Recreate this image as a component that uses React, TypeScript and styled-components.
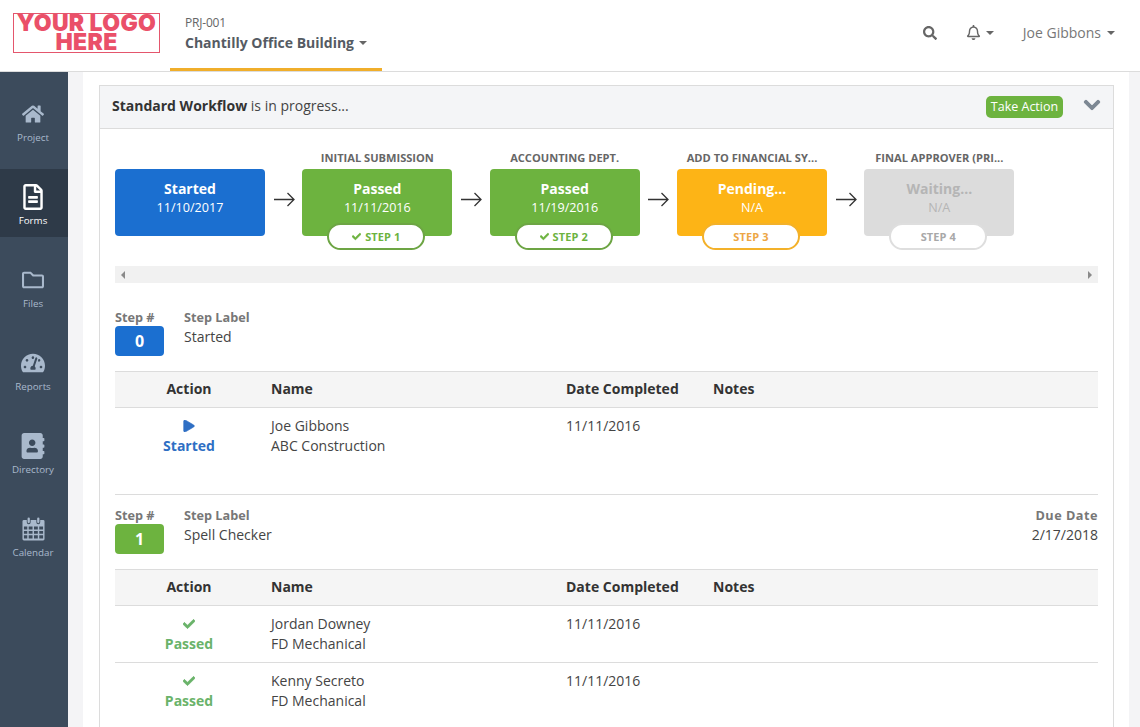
import React from "react";
import styled, { createGlobalStyle } from "styled-components";
import { FaHome, FaRegFileAlt, FaRegFolder, FaTachometerAlt, FaAddressBook, FaSearch, FaRegBell, FaChevronDown, FaCheck, FaPlay } from "react-icons/fa";

const Global = createGlobalStyle`
  html, body { margin: 0; padding: 0; height: 100%; overflow: hidden; background: #f4f4f6; }
  body { font-family: "Open Sans", "Liberation Sans", sans-serif; font-size: 14px; color: #444; }
  * { box-sizing: border-box; }
`;

const Page = styled.div`display: flex; flex-direction: column; height: 727px; overflow: hidden;`;
const TopBar = styled.header`display: flex; align-items: flex-start; height: 72px; background: #fff; border-bottom: 1px solid #dcdcdc; flex: none; padding-left: 13px;`;
const Logo = styled.div`
  width: 147px; height: 40px; margin-top: 13px; border: 1px solid #e4566d; color: #ea5069;
  font-family: Inter, "Liberation Sans", sans-serif; font-weight: 900; font-size: 23px; line-height: 19px;
  letter-spacing: 0.35px; text-align: center; white-space: nowrap;
`;
const ProjectTab = styled.div`
  width: 212px; height: 71px; margin-left: 10px; padding: 15px 0 0 15px; border-bottom: 3px solid #f0ae2b;
`;
const ProjectCode = styled.div`font-size: 12px; line-height: 16px; color: #666; letter-spacing: -0.2px;`;
const ProjectName = styled.div`font-size: 14px; font-weight: 700; line-height: 20px; margin-top: 2px; color: #555b63; display: flex; align-items: center; gap: 5px;`;
const Caret = styled.span`display: inline-block; width: 0; height: 0; border-left: 4px solid transparent; border-right: 4px solid transparent; border-top: 4px solid #666;`;
const TopActions = styled.div`margin-left: auto; display: flex; align-items: center; height: 65px; color: #666; padding-right: 25px;`;
const SearchButton = styled.span`display: flex; color: #666; font-size: 14px; margin: 1px 29px 0 0;`;
const BellButton = styled.span`display: flex; align-items: center; gap: 5px; color: #666; font-size: 15px; margin-right: 29px;`;
const UserButton = styled.span`display: flex; align-items: center; gap: 6px; color: #777; font-size: 14px;`;

const Body = styled.div`display: flex; flex: 1; min-height: 0;`;
const SideNav = styled.nav`width: 68px; background: #3c4b5c; padding-top: 14px; display: flex; flex-direction: column; gap: 15px; flex: none;`;
const NavItem = styled.div<{ $active?: boolean }>`
  height: 68px; display: flex; flex-direction: column; align-items: center; justify-content: flex-start; padding: 16px 2px 0 0;
  background: ${p => (p.$active ? "#2e3a48" : "transparent")};
  color: ${p => (p.$active ? "#fff" : "#a9b9cc")};
  font-size: 9.8px;
`;
const NavIcon = styled.span<{ $size: number }>`height: 24px; display: flex; align-items: center; justify-content: center; font-size: ${p => p.$size}px;`;
const NavLabel = styled.span<{ $active?: boolean }>`margin-top: 5px; line-height: 14px; color: ${p => (p.$active ? "#fff" : "#a9b9cc")};`;

const Gutter = styled.div`width: 15px; flex: none;`;
const Content = styled.main`width: 1046px; background: #fff; padding: 13px 15px 0 16px; overflow: hidden; flex: none;`;
const Panel = styled.section`border: 1px solid #dcdcdc; border-bottom: 0; height: 700px;`;
const PanelHead = styled.div`
  height: 43px; background: #f4f5f7; border-bottom: 1px solid #dcdcdc; display: flex; align-items: center;
  padding: 0 12px; font-size: 14px; color: #444;
`;
const PanelText = styled.span`margin-bottom: 4px;`;
const PanelTitle = styled.strong`color: #333; font-weight: 700;`;
const TakeAction = styled.span`
  margin-left: auto; background: #6db33f; color: #fff; border-radius: 5px; width: 77px; height: 22px;
  display: flex; align-items: center; justify-content: center; font-size: 12.5px; margin-bottom: 1px;
`;
const Collapse = styled.span`
  display: flex; color: #7d8894; font-size: 18px; margin: 0 0 4px 20px;
  svg { stroke: currentColor; stroke-width: 30; }
`;

const PanelBody = styled.div`padding: 0 15px;`;
const Flow = styled.div`display: flex; height: 137px; align-items: flex-start;`;
const FlowStep = styled.div`width: 150px; flex: none; padding-top: 22px;`;
const FlowTitle = styled.div`
  height: 18px; font-size: 11.1px; font-weight: 700; color: #666; text-align: center; line-height: 14px; white-space: nowrap;
`;
const FlowCard = styled.div<{ $bg: string; $fg: string }>`
  position: relative; height: 67px; border-radius: 4px; background: ${p => p.$bg}; color: ${p => p.$fg};
  text-align: center; padding-top: 10px;
`;
const FlowStatus = styled.div`font-size: 14px; font-weight: 700; line-height: 19px;`;
const FlowDate = styled.div`font-size: 12.6px; line-height: 19px;`;
const StepPill = styled.div<{ $color: string; $text: string }>`
  position: absolute; left: 25px; top: 54px; width: 98px; height: 27px; border-radius: 14px; background: #fff;
  border: 2px solid ${p => p.$color}; color: ${p => p.$text}; font-size: 11px; font-weight: 700;
  display: flex; align-items: center; justify-content: center; gap: 4px; letter-spacing: 0.1px;
  svg { stroke: currentColor; stroke-width: 30; }
`;
const ArrowSlot = styled.div`width: 37.33px; flex: none; display: flex; justify-content: center; padding: 63px 0 0 1px;`;
const FakeScroll = styled.div`height: 17px; background: #f1f1f1; display: flex; align-items: center; justify-content: space-between; padding: 0 6px;`;
const ScrollArrow = styled.span<{ $right?: boolean }>`
  width: 0; height: 0; border-top: 4px solid transparent; border-bottom: 4px solid transparent;
  ${p => (p.$right ? "border-left: 4px solid #8a8a8a;" : "border-right: 4px solid #8a8a8a;")}
`;

const StepBlock = styled.div<{ $top: number }>`margin-top: ${p => p.$top}px;`;
const Divider = styled.div`height: 1px; background: #dcdcdc; margin: 0 0 12px;`;
const StepHead = styled.div`display: flex; height: 62px;`;
const StepNumCol = styled.div`width: 69px;`;
const StepLabelCol = styled.div`flex: 1;`;
const SmallHead = styled.div`font-size: 12.7px; font-weight: 700; color: #777; line-height: 17px;`;
const StepDueCol = styled.div`
  text-align: right;
  ${SmallHead} { letter-spacing: 0.5px; }
`;
const StepBadge = styled.div<{ $bg: string }>`
  width: 49px; height: 30px; background: ${p => p.$bg}; color: #fff; border-radius: 4px; font-weight: 700; font-size: 16px;
  display: flex; align-items: center; justify-content: center;
`;
const StepValue = styled.div`font-size: 14px; line-height: 20px; color: #444; margin-top: 1px;`;
const Cols = styled.div`display: grid; grid-template-columns: 148px 8px 295px 147px 1fr;`;
const TableHead = styled(Cols)`
  height: 37px; background: #f5f5f5; border-top: 1px solid #dcdcdc; border-bottom: 1px solid #dcdcdc; align-items: center;
  font-weight: 700; color: #333; font-size: 14px; padding-bottom: 2px;
`;
const HeadAction = styled.span`text-align: center;`;
const Row = styled(Cols)<{ $border?: boolean }>`
  height: 57px; padding-top: 8px; line-height: 20px; font-size: 14px; color: #444;
  border-bottom: ${p => (p.$border ? "1px solid #dcdcdc" : "0")};
`;
const ActionCell = styled.div<{ $color: string }>`
  text-align: center; color: ${p => p.$color}; font-weight: 700; display: flex; flex-direction: column; align-items: center;
`;
const ActionGlyph = styled.span`
  height: 20px; display: flex; align-items: center; font-size: 12px;
  svg { stroke: currentColor; stroke-width: 30; }
`;

const CalendarIcon = () => (
  <svg width="23" height="24" viewBox="0 0 24 25" fill="currentColor">
    <path fillRule="evenodd" d="M2 3h3v2.500a2 2 0 0 0 4 0V3h6v2.500a2 2 0 0 0 4 0V3h3a1.500 1.500 0 0 1 1.500 1.500V23a1.500 1.500 0 0 1-1.500 1.500H2A1.500 1.500 0 0 1 .5 23V4.500A1.500 1.500 0 0 1 2 3zM2 10v3h3.500v-3zm5 0v3h4v-3zm5.500 0v3h4v-3zm5.500 0v3h4v-3zM2 14.500v3h3.500v-3zm5 0v3h4v-3zm5.500 0v3h4v-3zm5.500 0v3h4v-3zM2 19v3.500h3.500V19zm5 0v3.500h4V19zm5.500 0v3.500h4V19zm5.500 0v3.500h4V19z" />
    <rect x="5.800" y="0.500" width="2.400" height="6" rx="1.200" />
    <rect x="15.800" y="0.500" width="2.400" height="6" rx="1.200" />
  </svg>
);

const Arrow = () => (
  <svg width="21" height="15" viewBox="0 0 21 15" fill="none" stroke="#333" strokeWidth="1.300">
    <path d="M0 7.500h20M13.500 1l6.500 6.500-6.500 6.500" />
  </svg>
);

const nav = [
  { label: "Project", icon: <FaHome />, size: 22 },
  { label: "Forms", icon: <FaRegFileAlt />, size: 26, active: true },
  { label: "Files", icon: <FaRegFolder />, size: 22 },
  { label: "Reports", icon: <FaTachometerAlt />, size: 24 },
  { label: "Directory", icon: <FaAddressBook />, size: 26 },
  { label: "Calendar", icon: <CalendarIcon />, size: 22 },
];

const GREEN = "#6db33f";
const flow = [
  { title: "", status: "Started", date: "11/10/2017", bg: "#1b6fd0", fg: "#fff" },
  { title: "INITIAL SUBMISSION", status: "Passed", date: "11/11/2016", bg: GREEN, fg: "#fff", pill: "STEP 1", check: true, pc: "#6da544", pt: GREEN },
  { title: "ACCOUNTING DEPT.", status: "Passed", date: "11/19/2016", bg: GREEN, fg: "#fff", pill: "STEP 2", check: true, pc: "#6da544", pt: GREEN },
  { title: "ADD TO FINANCIAL SY...", status: "Pending...", date: "N/A", bg: "#fdb416", fg: "#fff", pill: "STEP 3", pc: "#f3b12a", pt: "#eda645" },
  { title: "FINAL APPROVER (PRI...", status: "Waiting...", date: "N/A", bg: "#dcdcdc", fg: "#b5b5b5", pill: "STEP 4", pc: "#dedede", pt: "#a8a8a8" },
];

const Tbl = ({ rows }: { rows: { color: string; glyph: React.ReactNode; action: string; name: string; company: string; date: string }[] }) => (
  <>
    <TableHead>
      <HeadAction>Action</HeadAction><span /><span>Name</span><span>Date Completed</span><span>Notes</span>
    </TableHead>
    {rows.map((r, i) => (
      <Row key={i} $border={i < rows.length - 1}>
        <ActionCell $color={r.color}>
          <ActionGlyph>{r.glyph}</ActionGlyph>
          <span>{r.action}</span>
        </ActionCell>
        <span />
        <div>{r.name}<br />{r.company}</div>
        <div>{r.date}</div>
        <div />
      </Row>
    ))}
  </>
);

const PASS = "#6ab36a";

export default function App() {
  return (
    <Page>
      <Global />
      <TopBar>
        <Logo>YOUR LOGO<br />HERE</Logo>
        <ProjectTab>
          <ProjectCode>PRJ-001</ProjectCode>
          <ProjectName>Chantilly Office Building <Caret /></ProjectName>
        </ProjectTab>
        <TopActions>
          <SearchButton><FaSearch /></SearchButton>
          <BellButton><FaRegBell /><Caret /></BellButton>
          <UserButton>Joe Gibbons <Caret /></UserButton>
        </TopActions>
      </TopBar>
      <Body>
        <SideNav>
          {nav.map(n => (
            <NavItem key={n.label} $active={n.active}>
              <NavIcon $size={n.size}>{n.icon}</NavIcon>
              <NavLabel $active={n.active}>{n.label}</NavLabel>
            </NavItem>
          ))}
        </SideNav>
        <Gutter />
        <Content>
          <Panel>
            <PanelHead>
              <PanelText><PanelTitle>Standard Workflow</PanelTitle> is in progress...</PanelText>
              <TakeAction>Take Action</TakeAction>
              <Collapse><FaChevronDown /></Collapse>
            </PanelHead>
            <PanelBody>
              <Flow>
                {flow.map((f, i) => (
                  <React.Fragment key={f.status + i}>
                    {i > 0 && <ArrowSlot><Arrow /></ArrowSlot>}
                    <FlowStep>
                      <FlowTitle>{f.title}</FlowTitle>
                      <FlowCard $bg={f.bg} $fg={f.fg}>
                        <FlowStatus>{f.status}</FlowStatus>
                        <FlowDate>{f.date}</FlowDate>
                        {f.pill && (
                          <StepPill $color={f.pc!} $text={f.pt!}>
                            {f.check && <FaCheck size={9} />}{f.pill}
                          </StepPill>
                        )}
                      </FlowCard>
                    </FlowStep>
                  </React.Fragment>
                ))}
              </Flow>
              <FakeScroll><ScrollArrow /><ScrollArrow $right /></FakeScroll>
              <StepBlock $top={26}>
                <StepHead>
                  <StepNumCol><SmallHead>Step #</SmallHead><StepBadge $bg="#1b6fd0">0</StepBadge></StepNumCol>
                  <StepLabelCol><SmallHead>Step Label</SmallHead><StepValue>Started</StepValue></StepLabelCol>
                </StepHead>
                <Tbl rows={[{ color: "#2f6fc4", glyph: <FaPlay />, action: "Started", name: "Joe Gibbons", company: "ABC Construction", date: "11/11/2016" }]} />
              </StepBlock>
              <StepBlock $top={29}>
                <Divider />
                <StepHead>
                  <StepNumCol><SmallHead>Step #</SmallHead><StepBadge $bg={GREEN}>1</StepBadge></StepNumCol>
                  <StepLabelCol><SmallHead>Step Label</SmallHead><StepValue>Spell Checker</StepValue></StepLabelCol>
                  <StepDueCol><SmallHead>Due Date</SmallHead><StepValue>2/17/2018</StepValue></StepDueCol>
                </StepHead>
                <Tbl rows={[
                  { color: PASS, glyph: <FaCheck />, action: "Passed", name: "Jordan Downey", company: "FD Mechanical", date: "11/11/2016" },
                  { color: PASS, glyph: <FaCheck />, action: "Passed", name: "Kenny Secreto", company: "FD Mechanical", date: "11/11/2016" },
                ]} />
              </StepBlock>
            </PanelBody>
          </Panel>
        </Content>
      </Body>
    </Page>
  );
}
